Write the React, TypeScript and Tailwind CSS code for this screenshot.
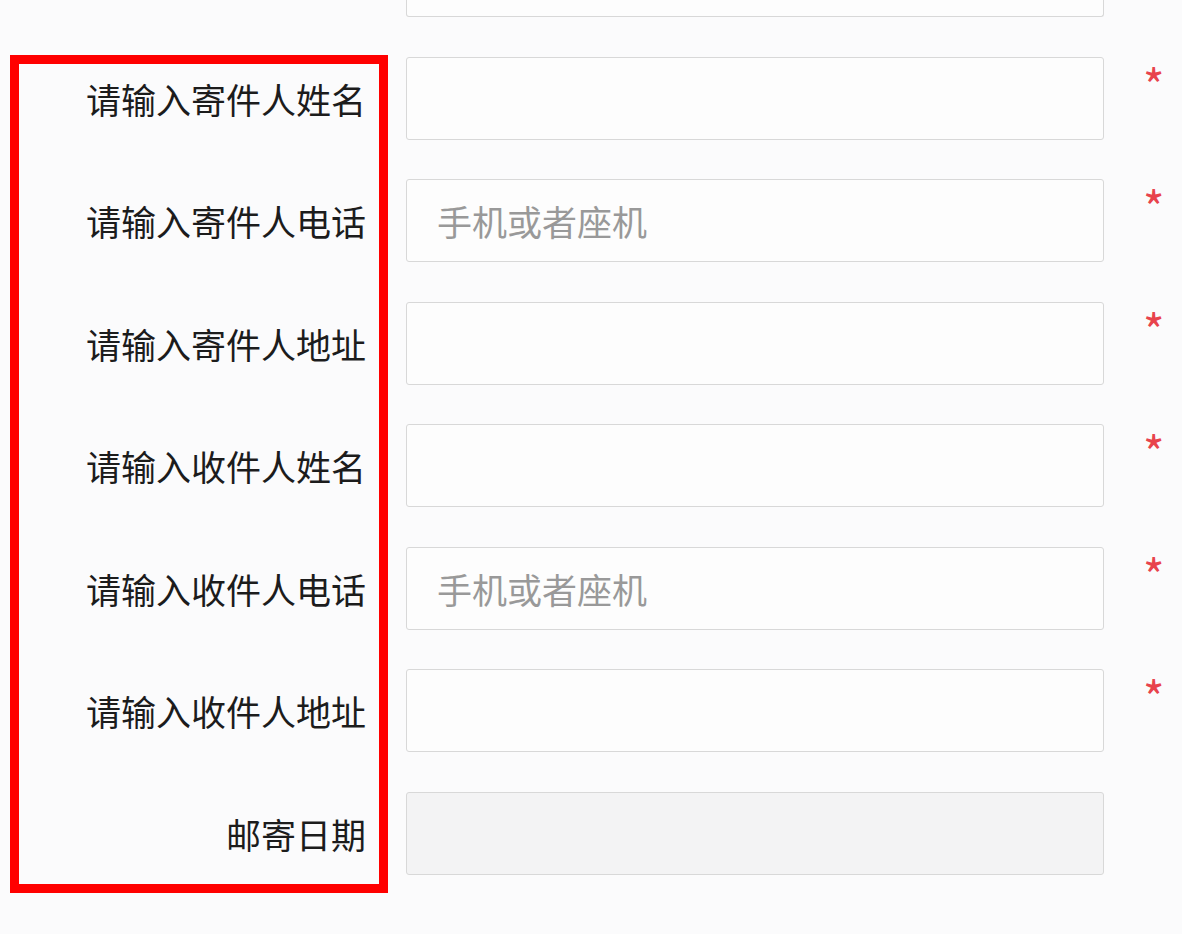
const rows = [
  { label: '请输入寄件人姓名', placeholder: '', required: true },
  { label: '请输入寄件人电话', placeholder: '手机或者座机', required: true },
  { label: '请输入寄件人地址', placeholder: '', required: true },
  { label: '请输入收件人姓名', placeholder: '', required: true },
  { label: '请输入收件人电话', placeholder: '手机或者座机', required: true },
  { label: '请输入收件人地址', placeholder: '', required: true },
  { label: '邮寄日期', placeholder: '', required: false, disabled: true },
]

export default function App() {
  return (
    <div
      className="relative h-[934px] w-[1182px] overflow-hidden bg-[#fbfbfc] text-[#1c1c1c]"
      style={{ fontFamily: '"Noto Sans CJK SC", "Noto Sans", sans-serif' }}
    >
      <div className="flex flex-col gap-[39.5px]">
        {/* field above, scrolled mostly out of view */}
        <div className="flex">
          <div className="w-[406px] shrink-0" />
          <div className="h-[17px] w-[698px] rounded-b-[3px] border border-t-0 border-[#d8d8d8] bg-[#fdfdfd]" />
        </div>

        {rows.map((row) => (
          <div key={row.label} className="flex h-[83px]">
            <div className="flex w-[366px] shrink-0 items-center justify-end text-[35px] leading-none">
              {row.label}
            </div>
            <div className="w-[40px] shrink-0" />
            <div
              className={`flex h-[83px] w-[698px] shrink-0 items-center rounded-[3px] border border-[#d8d8d8] pl-[30px] text-[35px] leading-none text-[#999999] ${
                row.disabled ? 'bg-[#f3f3f4]' : 'bg-[#fdfdfd]'
              }`}
            >
              {row.placeholder}
            </div>
            {row.required && (
              <span className="ml-[39px] mt-[4px] text-[46px] leading-none text-[#e8434c]">*</span>
            )}
          </div>
        ))}
      </div>

      {/* red annotation frame drawn over the labels */}
      <div className="pointer-events-none absolute left-[10px] top-[55px] h-[838px] w-[378px] border-[9px] border-[#ff0000]" />
    </div>
  )
}
